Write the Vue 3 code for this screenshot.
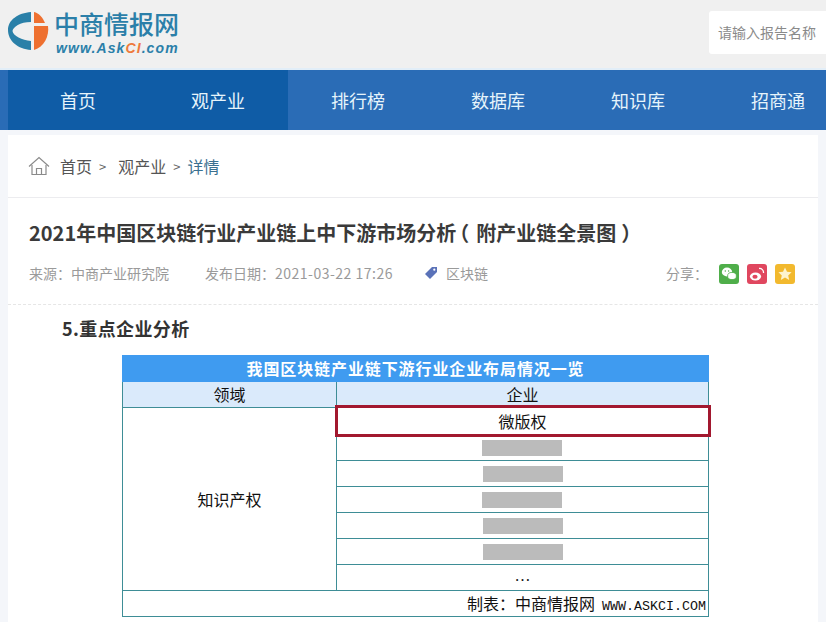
<script setup>
const navItems = ['首页', '观产业', '排行榜', '数据库', '知识库', '招商通']
const redactions = [145, 146, 145, 146, 146]
</script>

<template>
  <div class="page">
    <header class="top">
      <div class="logo">
        <svg class="logo-mark" width="44" height="44" viewBox="0 0 44 44">
          <path d="M23 2 C10 3 0 10 0 20 C0 31 10 39 23 40 V31 C14 30 5 26 4.5 21 C5 17 12 12 23 12 Z" fill="#2a80a8" />
          <path d="M26 2 C31 3 35 8 37 13 H26 Z" fill="#ee7030" />
          <path d="M26 16 H40 C41.5 26 36 37 26 40 Z" fill="#ee7030" />
        </svg>
        <div class="logo-text">
          <div class="logo-cn">中商情报网</div>
          <div class="logo-en">www.Ask<span class="logo-ci">CI</span>.com</div>
        </div>
      </div>
      <div class="search">请输入报告名称</div>
    </header>

    <nav class="nav">
      <div class="nav-active-band"></div>
      <div v-for="item in navItems" :key="item" class="nav-item">{{ item }}</div>
    </nav>

    <main class="card">
      <div class="crumbs">
        <svg class="home" width="22" height="20" viewBox="0 0 22 20" fill="none" stroke="#8a8a8a" stroke-width="1.2">
          <path d="M1 10.5 L11 1.5 L21 10.5" />
          <path d="M4 9 V18.5 H18 V9" />
          <path d="M8.5 18.5 V12.5 H13.5 V18.5" />
        </svg>
        <span>首页</span><span class="sep">&gt;</span><span class="crumb-two">观产业</span><span class="sep">&gt;</span><span class="current">详情</span>
      </div>

      <section class="article-head">
        <h1>2021年中国区块链行业产业链上中下游市场分析<span class="par-l">（</span>附产业链全景图<span class="par-r">）</span></h1>
        <div class="meta">
          <span>来源：中商产业研究院</span>
          <span class="date">发布日期：<span class="nums">2021-03-22 17:26</span></span>
          <svg class="tag" width="14" height="14" viewBox="0 0 14 14"><path d="M8 1 H13 V6 L6 13 L1 8 Z" fill="#5a72b8" /><circle cx="10.3" cy="3.7" r="1.1" fill="#fff" /></svg>
          <span class="tag-text">区块链</span>
          <span class="share">
            <span class="share-label">分享：</span>
            <svg class="sh" width="20" height="20" viewBox="0 0 20 20">
              <rect width="20" height="20" rx="3" fill="#4fae4a" />
              <ellipse cx="8" cy="8" rx="5.2" ry="4.4" fill="#fff" />
              <ellipse cx="13" cy="12" rx="4.4" ry="3.6" fill="#fff" stroke="#4fae4a" stroke-width=".8" />
              <circle cx="6.3" cy="7" r=".7" fill="#4fae4a" /><circle cx="9.6" cy="7" r=".7" fill="#4fae4a" />
            </svg>
            <svg class="sh" width="20" height="20" viewBox="0 0 20 20">
              <rect width="20" height="20" rx="3" fill="#e0475f" />
              <ellipse cx="8.5" cy="12.5" rx="5.6" ry="4" fill="#fff" />
              <ellipse cx="8" cy="12.8" rx="2.6" ry="2" fill="#e0475f" />
              <path d="M12 4.5 A4 4 0 0 1 16.5 9" fill="none" stroke="#fff" stroke-width="1.3" />
            </svg>
            <svg class="sh" width="20" height="20" viewBox="0 0 20 20">
              <rect width="20" height="20" rx="3" fill="#f2b92e" />
              <path d="M10 3.5 L12 7.8 L16.6 8.3 L13.2 11.4 L14.2 16 L10 13.6 L5.8 16 L6.8 11.4 L3.4 8.3 L8 7.8 Z" fill="#fdf3cf" />
            </svg>
          </span>
        </div>
      </section>

      <section class="body">
        <h2>5.重点企业分析</h2>
        <table class="chart">
          <colgroup><col class="c1" /><col /></colgroup>
          <tbody>
            <tr class="r-title"><td colspan="2">我国区块链产业链下游行业企业布局情况一览</td></tr>
            <tr class="r-head"><td>领域</td><td>企业</td></tr>
            <tr>
              <td rowspan="7" class="domain">知识产权</td>
              <td class="marked">微版权<span class="red-box"></span></td>
            </tr>
            <tr v-for="(offset, i) in redactions" :key="i">
              <td><span class="blank" :style="{ marginLeft: offset + 'px' }"></span></td>
            </tr>
            <tr><td class="more">…</td></tr>
            <tr class="r-foot"><td colspan="2">制表：中商情报网<span class="url">WWW.ASKCI.COM</span></td></tr>
          </tbody>
        </table>
      </section>
    </main>
  </div>
</template>

<style>
html, body { margin: 0; background: #f4f6fa; }
</style>

<style scoped>
.page {
  width: 826px;
  height: 622px;
  overflow: hidden;
  background: #f4f6fa;
  font-family: "Noto Sans CJK SC", "Liberation Sans", sans-serif;
}
.top {
  height: 68px;
  border-bottom: 2px solid #e2eef8;
  background: #f0f0f0;
  display: flex;
  justify-content: space-between;
  padding-left: 8px;
}
.logo { display: flex; align-items: flex-start; padding-top: 10px; gap: 2px; }
.logo-mark { flex: none; }
.logo-text { margin-top: -2px; }
.logo-cn {
  font-size: 25px;
  line-height: 30px;
  font-weight: 500;
  color: #2b7fa9;
}
.logo-en {
  margin: 2px 0 0 2px;
  font: italic bold 14px/16px "Liberation Sans", sans-serif;
  color: #2b7fa9;
  letter-spacing: 1.1px;
  white-space: nowrap;
}
.logo-ci { color: #ee7a3c; }
.search {
  margin-top: 11px;
  width: 117px;
  height: 43px;
  background: #fff;
  border-radius: 3px 0 0 3px;
  box-sizing: border-box;
  padding-left: 9px;
  font-size: 14px;
  line-height: 43px;
  color: #8a8a8a;
  white-space: nowrap;
  overflow: hidden;
}
.nav {
  position: relative;
  display: flex;
  height: 60px;
  padding-left: 8px;
  background: #2a6cb6;
  overflow: hidden;
}
.nav-active-band {
  position: absolute;
  left: 8px;
  top: 0;
  width: 280px;
  height: 60px;
  background: #0f5ca6;
}
.nav-item {
  position: relative;
  flex: none;
  width: 140px;
  text-align: center;
  font-size: 18px;
  line-height: 60px;
  color: #e6f4fb;
}
.card {
  margin: 5px 8px 0;
  background: #fff;
  height: 487px;
}
.crumbs {
  height: 63px;
  box-sizing: border-box;
  border-bottom: 1px solid #ececef;
  padding-left: 20px;
  display: flex;
  align-items: center;
  font-size: 16px;
  color: #555;
}
.home { margin-right: 10px; }
.sep { margin: 0 12px 0 7px; font-size: 13px; color: #666; }
.crumb-two + .sep { margin: 0 7px 0 7px; }
.current { color: #3a7090; }
.article-head {
  height: 107px;
  box-sizing: border-box;
  border-bottom: 1px dashed #e6e6e6;
  padding: 20px 0 0 21px;
}
h1 {
  margin: 0;
  font-size: 20px;
  line-height: 30px;
  font-weight: 700;
  color: #3a3a3a;
  white-space: nowrap;
}
.par-l { font-feature-settings: "halt"; margin: 0 7px 0 3px; }
.par-r { margin-left: 5px; }
.meta {
  display: flex;
  align-items: center;
  margin-top: 13px;
  height: 24px;
  font-size: 14px;
  color: #9a9a9a;
}
.date { margin-left: 36px; }
.nums { letter-spacing: .5px; }
.tag { margin-left: 31px; }
.tag-text { margin-left: 8px; }
.share {
  margin-left: auto;
  display: flex;
  align-items: center;
  margin-right: 23px;
}
.share-label { margin-right: 9px; }
.sh { margin: 2px 0 0 8px; }
.share-label + .sh { margin-left: 2px; }
h2 {
  margin: 0;
  padding: 10px 0 0 54px;
  font-size: 18px;
  line-height: 27px;
  font-weight: 700;
  letter-spacing: .4px;
  color: #333;
}
.chart {
  margin: 13px 0 0 114px;
  width: 587px;
  table-layout: fixed;
  border-collapse: collapse;
  font-size: 16px;
  color: #111;
  text-align: center;
}
.c1 { width: 214px; }
.chart td {
  border: 1px solid #3e8d96;
  height: 25px;
  padding: 0;
  line-height: 25px;
  position: relative;
}
.chart td.marked { height: 26px; }
.r-title td {
  background: #3f9bf0;
  color: #fff;
  font-weight: 700;
  letter-spacing: .9px;
  border-color: #3f9bf0;
}
.r-head td { background: #daeafb; }
.blank {
  display: block;
  width: 80px;
  height: 16px;
  background: #bbb;
}
.chart td.more {
  font-family: "Liberation Serif", serif;
  line-height: 21px;
  padding-bottom: 4px;
  height: 21px;
}
.r-foot td { text-align: right; padding-right: 2px; }
.url {
  font-family: "Liberation Mono", monospace;
  font-size: 13.33px;
  line-height: 16px;
  margin-left: 7px;
}
.red-box {
  position: absolute;
  left: -2px;
  top: -3px;
  right: -3px;
  bottom: -3px;
  border: 3px solid #a2182f;
  pointer-events: none;
}
</style>
